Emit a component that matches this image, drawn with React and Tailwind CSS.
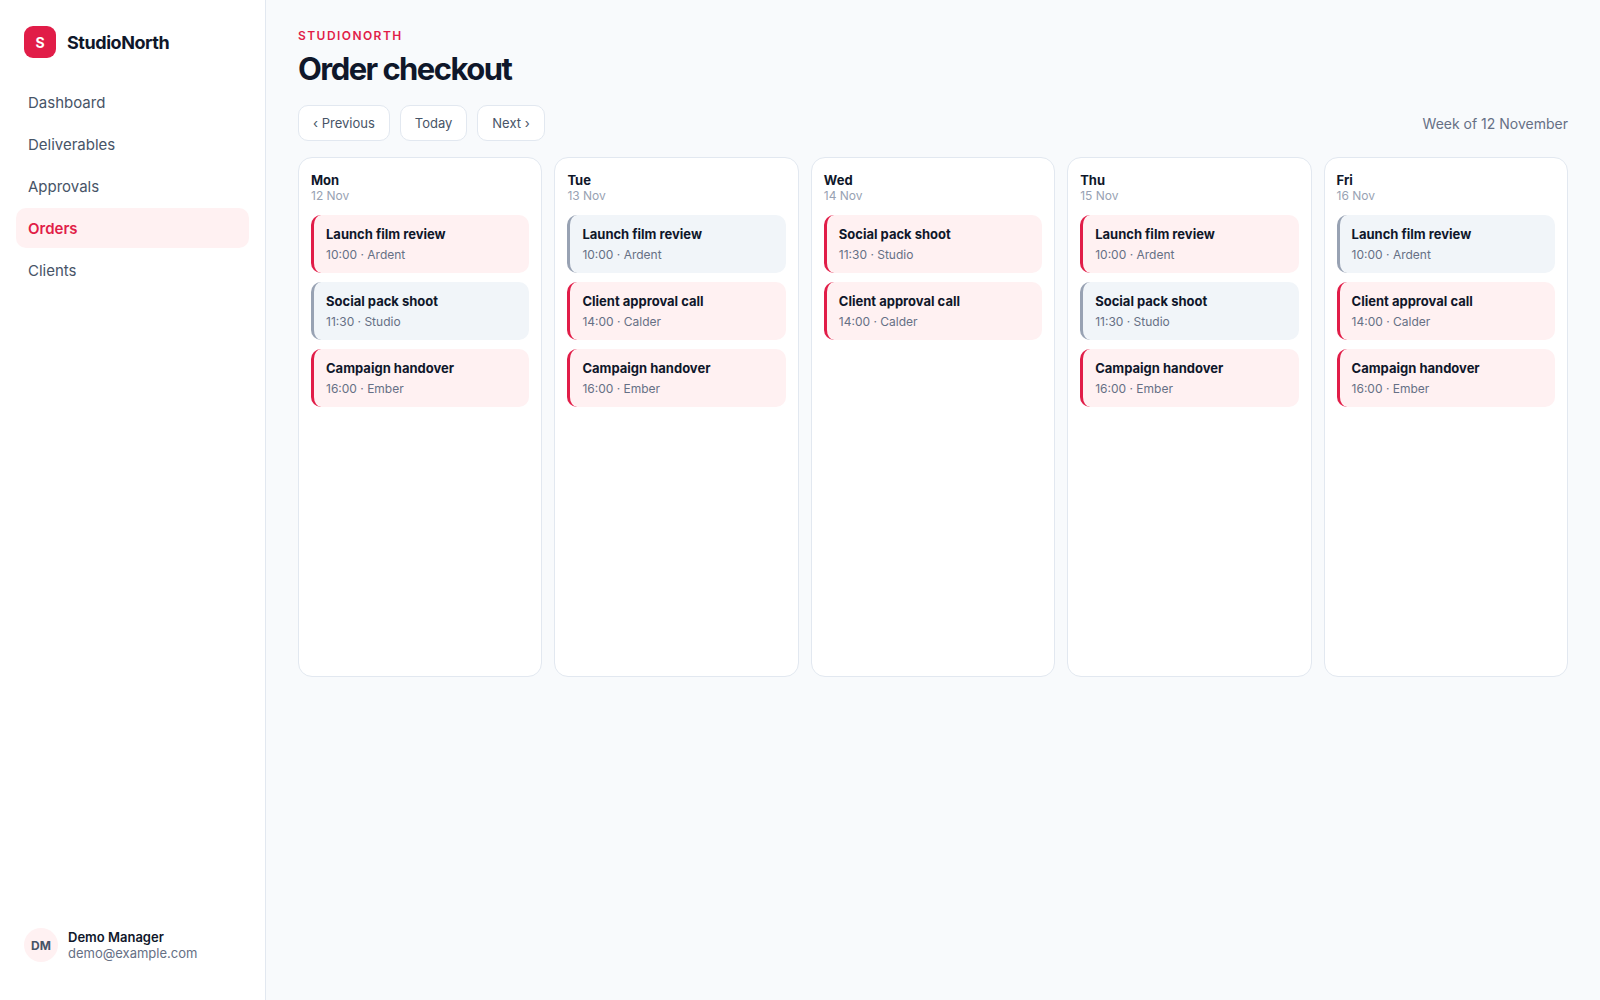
const navItems = ["Dashboard", "Deliverables", "Approvals", "Orders", "Clients"]

const launch = { title: "Launch film review", time: "10:00", client: "Ardent" }
const social = { title: "Social pack shoot", time: "11:30", client: "Studio" }
const approval = { title: "Client approval call", time: "14:00", client: "Calder" }
const handover = { title: "Campaign handover", time: "16:00", client: "Ember" }

const days = [
  { name: "Mon", date: "12 Nov", events: [launch, { ...social, muted: true }, handover] },
  { name: "Tue", date: "13 Nov", events: [{ ...launch, muted: true }, approval, handover] },
  { name: "Wed", date: "14 Nov", events: [social, approval] },
  { name: "Thu", date: "15 Nov", events: [launch, { ...social, muted: true }, handover] },
  { name: "Fri", date: "16 Nov", events: [{ ...launch, muted: true }, approval, handover] },
]

const Sidebar = () => {
  return (
    <aside className="flex w-[266px] shrink-0 flex-col border-r border-[#e2e8f0] bg-white px-4 pt-[26px] pb-[38px]">
      <div className="flex items-center gap-[11px] px-2">
        <div className="flex size-8 items-center justify-center rounded-[9px] bg-[#e11d48] pt-[2px] text-sm font-bold text-white">
          S
        </div>
        <span className="pt-[2px] text-lg font-bold tracking-tight">StudioNorth</span>
      </div>

      <nav className="mt-6 flex flex-col gap-0.5">
        {navItems.map((item) => (
          <a
            key={item}
            href="#"
            aria-current={item === "Orders" ? "page" : undefined}
            className={`rounded-[10px] px-3 pt-[9px] pb-[7px] text-[15px] leading-6 ${
              item === "Orders" ? "bg-[#fff1f2] font-semibold text-[#e11d48]" : "text-[#475467] hover:bg-[#f8fafc]"
            }`}
          >
            {item}
          </a>
        ))}
      </nav>

      {/* Signed-in user */}
      <div className="mt-auto flex items-center gap-[10px] px-2">
        <div className="flex size-[34px] items-center justify-center rounded-full bg-[#fff1f2] pt-[2px] text-xs font-bold text-[#475467]">
          DM
        </div>
        <div className="text-[13px] leading-4">
          <p className="font-semibold">Demo Manager</p>
          <p className="text-[#667085]">demo@example.com</p>
        </div>
      </div>
    </aside>
  )
}

const ToolbarButton = ({ children }) => (
  <button
    type="button"
    className="h-9 rounded-[10px] border border-[#e2e8f0] bg-white px-[14px] pt-[2px] text-[13px] text-[#475467] hover:bg-[#f8fafc]"
  >
    {children}
  </button>
)

const EventCard = ({ event }) => (
  <article
    className={`rounded-[10px] border-l-[3px] px-3 pt-[10px] pb-2 ${
      event.muted ? "border-[#98a2b3] bg-[#f1f5f9]" : "border-[#e11d48] bg-[#fff1f2]"
    }`}
  >
    <h3 className="text-[13px] leading-[18px] font-bold">{event.title}</h3>
    <p className="mt-[2px] text-xs leading-5 text-[#667085]">
      {event.time} · {event.client}
    </p>
  </article>
)

const App = () => {
  return (
    <div className="flex min-h-screen bg-[#f8fafc] font-[Inter,sans-serif] text-[#0f172a]">
      <Sidebar />

      <main className="min-w-0 flex-1 px-8 pt-7 pb-8">
        <p className="text-xs leading-4 font-semibold tracking-[0.12em] text-[#e11d48] uppercase">StudioNorth</p>
        <h1 className="mt-[5px] text-[31px] leading-10 font-bold tracking-tighter">Order checkout</h1>

        <div className="mt-4 flex items-center justify-between">
          <div className="flex gap-[10px]">
            <ToolbarButton>‹ Previous</ToolbarButton>
            <ToolbarButton>Today</ToolbarButton>
            <ToolbarButton>Next ›</ToolbarButton>
          </div>
          <span className="pt-[2px] text-sm text-[#667085]">Week of 12 November</span>
        </div>

        {/* Week columns */}
        <div className="mt-4 grid grid-cols-5 gap-3">
          {days.map((day) => (
            <section key={day.name} className="min-h-[520px] rounded-[14px] border border-[#e2e8f0] bg-white p-3">
              <header className="pt-[2px]">
                <h2 className="text-[13px] leading-4 font-bold">{day.name}</h2>
                <p className="text-xs leading-[15px] text-[#98a2b3]">{day.date}</p>
              </header>
              <div className="mt-3 flex flex-col gap-[9px]">
                {day.events.map((event) => (
                  <EventCard key={event.title} event={event} />
                ))}
              </div>
            </section>
          ))}
        </div>
      </main>
    </div>
  )
}

export default App
